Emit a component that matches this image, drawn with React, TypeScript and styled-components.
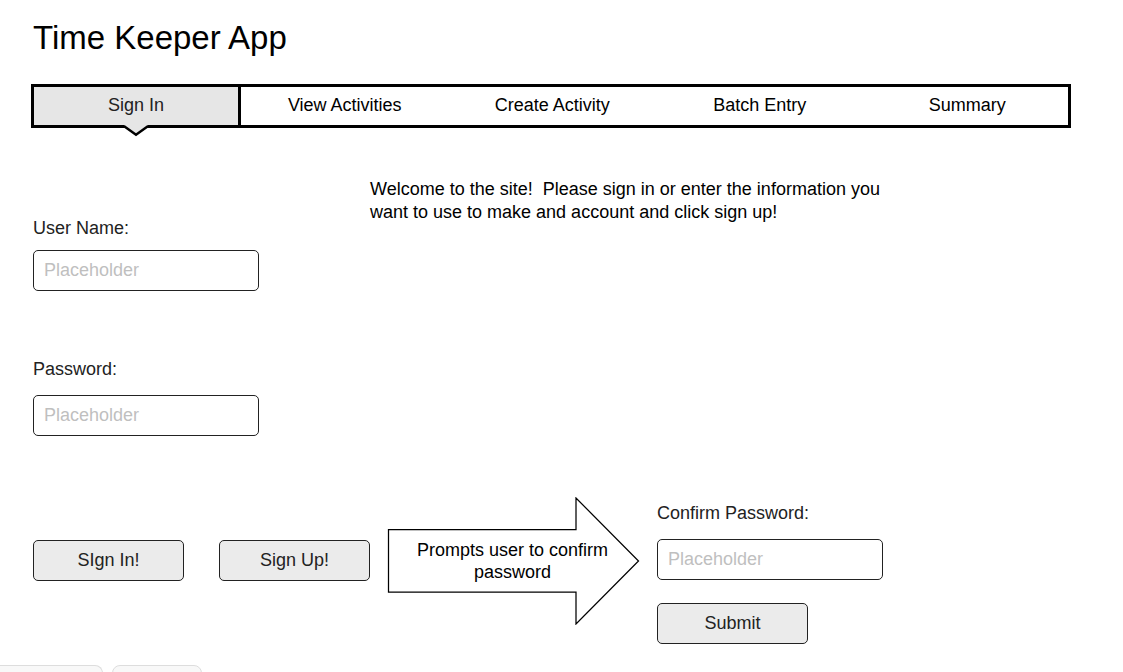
import React from "react";
import styled, { createGlobalStyle } from "styled-components";

const GlobalStyle = createGlobalStyle`
  *, *::before, *::after { box-sizing: border-box; }
  body {
    margin: 0;
    background: #fff;
    color: #000;
    font-family: "Liberation Sans", Arial, sans-serif;
    font-size: 18px;
    line-height: 22px;
  }
`;

const Page = styled.div`
  display: flex;
  flex-direction: column;
  min-height: 100vh;
`;

const Header = styled.header`
  padding: 18px 52px 0 31px;
`;

const Title = styled.h1`
  margin: 0 0 26px 2px;
  font-size: 33px;
  font-weight: 400;
  line-height: 40px;
`;

const Nav = styled.nav`
  display: grid;
  grid-template-columns: 210px repeat(4, 1fr);
  height: 44px;
`;

const Tab = styled.a<{ $active?: boolean }>`
  position: relative;
  display: flex;
  align-items: center;
  justify-content: center;
  padding-bottom: 2px;
  color: ${(p) => (p.$active ? "#222" : "#000")};
  background: ${(p) => (p.$active ? "#e6e6e6" : "#fff")};
  border: solid #000;
  border-width: ${(p) => (p.$active ? "3px" : "3px 0")};
  text-decoration: none;
  &:last-child {
    border-right-width: 3px;
    padding-left: 3px;
  }
`;

const Pointer = styled.svg`
  position: absolute;
  left: 50%;
  top: 100%;
  margin-left: -15px;
`;

const Main = styled.main`
  display: grid;
  grid-template-columns: 337px 1fr;
  padding: 50px 52px 20px 33px;
`;

const SignInForm = styled.form`
  display: flex;
  flex-direction: column;
  padding-top: 39px;
`;

const Field = styled.div<{ $gap: number; $after: number }>`
  display: flex;
  flex-direction: column;
  gap: ${(p) => p.$gap}px;
  margin-bottom: ${(p) => p.$after}px;
`;

const Label = styled.label`
  color: #222;
`;

const Input = styled.input`
  width: 226px;
  height: 41px;
  padding: 0 10px;
  border: 1px solid #222;
  border-radius: 5px;
  background: #fff;
  color: #222;
  font: inherit;
  &::placeholder { color: #bfbfbf; opacity: 1; }
`;

const Actions = styled.div`
  display: flex;
  justify-content: space-between;
`;

const Button = styled.button`
  width: 151px;
  height: 41px;
  padding: 0 0 2px;
  border: 1px solid #222;
  border-radius: 5px;
  background: #ebebeb;
  color: #222;
  font: inherit;
`;

const Side = styled.section`
  display: flex;
  flex-direction: column;
`;

const Welcome = styled.p`
  margin: 0 0 273px;
  max-width: 512px;
  line-height: 23px;
  white-space: pre-wrap;
`;

const ConfirmFlow = styled.div`
  display: flex;
  gap: 17px;
  padding-left: 17px;
`;

const Callout = styled.div`
  position: relative;
  flex: none;
  display: flex;
  align-items: center;
  justify-content: center;
  width: 253px;
  height: 128px;
  padding-right: 2px;
  text-align: center;
`;

const ArrowShape = styled.svg`
  position: absolute;
  inset: 0;
`;

const CalloutText = styled.p`
  position: relative;
  margin: 0;
  width: 200px;
`;

const ConfirmForm = styled.form`
  padding-top: 5px;
`;

const Footer = styled.footer`
  display: flex;
  gap: 9px;
  height: 7px;
  margin-top: auto;
  overflow: hidden;
`;

const SheetTab = styled.div<{ $width: number; $first?: boolean }>`
  width: ${(p) => p.$width}px;
  height: 24px;
  border: 1px solid #ddd;
  border-left-width: ${(p) => (p.$first ? 0 : 1)}px;
  border-radius: ${(p) => (p.$first ? "0 8px 0 0" : "8px 8px 0 0")};
  background: #f8f8f8;
`;

const tabs = ["Sign In", "View Activities", "Create Activity", "Batch Entry", "Summary"];

type TextFieldProps = {
  id: string;
  label: string;
  gap?: number;
  after: number;
  type?: string;
};

function TextField({ id, label, gap = 15, after, type = "password" }: TextFieldProps) {
  return (
    <Field $gap={gap} $after={after}>
      <Label htmlFor={id}>{label}</Label>
      <Input id={id} type={type} placeholder="Placeholder" />
    </Field>
  );
}

export default function App() {
  return (
    <>
      <GlobalStyle />
      <Page>
        <Header>
          <Title>Time Keeper App</Title>
          <Nav>
            {tabs.map((name, i) => (
              <Tab key={name} href="#" $active={i === 0} aria-current={i === 0 ? "page" : undefined}>
                {name}
                {i === 0 && (
                  <Pointer width="30" height="12" viewBox="0 0 30 12" aria-hidden="true">
                    <path d="M3 0H27V1L15 10L3 1Z" fill="#e6e6e6" />
                    <path d="M2 1.5H3.5L15 9.8L26.5 1.5H28" fill="none" stroke="#000" strokeWidth="2.4" />
                  </Pointer>
                )}
              </Tab>
            ))}
          </Nav>
        </Header>
        <Main>
          <SignInForm>
            <TextField id="user" label="User Name:" type="text" gap={11} after={67} />
            <TextField id="password" label="Password:" after={104} />
            <Actions>
              <Button type="button">SIgn In!</Button>
              <Button type="button">Sign Up!</Button>
            </Actions>
          </SignInForm>
          <Side>
            <Welcome>
              {"Welcome to the site!  Please sign in or enter the information you want to use to make and account and click sign up!"}
            </Welcome>
            <ConfirmFlow>
              <Callout>
                <ArrowShape width="253" height="128" viewBox="0 0 253 128" aria-hidden="true">
                  <path
                    d="M1.5 32.5H189V1L251.5 64L189 127V95H1.5Z"
                    fill="#fff"
                    stroke="#000"
                    strokeWidth="1.25"
                  />
                </ArrowShape>
                <CalloutText>Prompts user to confirm password</CalloutText>
              </Callout>
              <ConfirmForm>
                <TextField id="confirm" label="Confirm Password:" after={23} />
                <Button type="button">Submit</Button>
              </ConfirmForm>
            </ConfirmFlow>
          </Side>
        </Main>
        <Footer>
          <SheetTab $width={103} $first />
          <SheetTab $width={90} />
        </Footer>
      </Page>
    </>
  );
}
